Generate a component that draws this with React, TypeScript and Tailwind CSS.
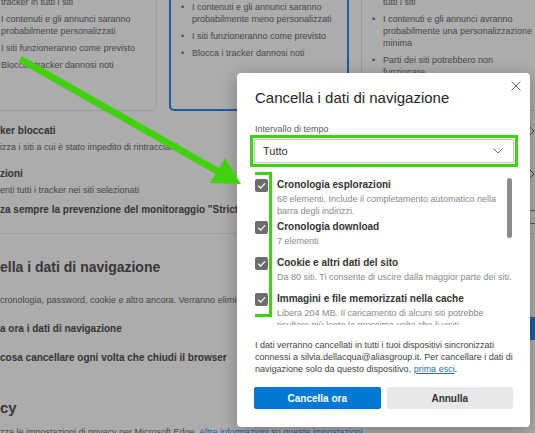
import React from "react";

const cards: { lines: string[][]; box: string; pad: string }[] = [
  {
    box: "w-[178px] border border-[#9a9a9a] rounded-[5px]",
    pad: "pt-[3px] pl-[10px]",
    lines: [
      ["Consente la maggior parte dei", "tracker in tutti i siti"],
      ["I contenuti e gli annunci saranno", "probabilmente personalizzati"],
      ["I siti funzioneranno come previsto"],
      ["Blocca i tracker dannosi noti"],
    ],
  },
  {
    box: "w-[180px] border-2 border-[#1c5a9e] rounded-[5px]",
    pad: "pt-[19px] pl-[10px]",
    lines: [
      ["I contenuti e gli annunci saranno", "probabilmente meno personalizzati"],
      ["I siti funzioneranno come previsto"],
      ["Blocca i tracker dannosi noti"],
    ],
  },
  {
    box: "w-[200px] border border-[#9a9a9a] rounded-[5px]",
    pad: "pt-[3px] pl-[10px]",
    lines: [
      ["Blocca la maggior parte dei tracker in", "tutti i siti"],
      ["I contenuti e gli annunci avranno", "probabilmente una personalizzazione", "minima"],
      ["Parti dei siti potrebbero non", "funzionare"],
    ],
  },
];

function Chevron() {
  return (
    <svg width="6" height="10" viewBox="0 0 6 10" className="shrink-0">
      <path d="M1 1l4 4-4 4" stroke="#444" strokeWidth="1" fill="none" />
    </svg>
  );
}

function BackgroundPage() {
  return (
    <div className="flex flex-col w-[535px] text-[#474747]">
      {/* cards */}
      <div className="flex gap-[12px] -ml-[21px] -mt-[20px] h-[131px]">
        {cards.map((c, i) => (
          <div key={i} className={`${c.box} ${c.pad} shrink-0`}>
            <ul className="flex flex-col gap-[5px] text-[9px] leading-[12px]">
              {c.lines.map((l, j) => (
                <li key={j} className="flex">
                  <span className="w-[11px] shrink-0">•</span>
                  <span>
                    {l.map((t, k) => (
                      <span key={k} className="block whitespace-nowrap">{t}</span>
                    ))}
                  </span>
                </li>
              ))}
            </ul>
          </div>
        ))}
      </div>

      {/* rows */}
      <div className="pt-[13px]">
        <div className="flex items-center justify-between text-[10px] leading-[14px] font-bold text-[#343434]">
          <span className="whitespace-nowrap">ker bloccati</span>
          <Chevron />
        </div>
        <div className="mt-[3px] text-[9px] leading-[12px] whitespace-nowrap">
          izza i siti a cui è stato impedito di rintracciarti
        </div>
      </div>
      <div className="pt-[14px]">
        <div className="flex items-center justify-between text-[10px] leading-[14px] font-bold text-[#343434]">
          <span className="whitespace-nowrap">zioni</span>
          <Chevron />
        </div>
        <div className="mt-[3px] text-[9px] leading-[12px] whitespace-nowrap">
          enti tutti i tracker nei siti selezionati
        </div>
      </div>
      <div className="pt-[7px] pb-[16px] flex items-start justify-between border-b border-[#9c9c9c]">
        <span className="text-[10px] leading-[14px] font-bold text-[#343434] whitespace-nowrap">
          za sempre la prevenzione del monitoraggio "Strict" per l'esplorazione InPrivate
        </span>
        <span className="mt-[7px] -mb-[7px] -mr-[20px] w-[36px] h-[14px] shrink-0 rounded-full border border-[#555]" />
      </div>

      <div className="mt-[23px] text-[14px] leading-[20px] font-bold text-[#363636] whitespace-nowrap">
        ella i dati di navigazione
      </div>
      <div className="mt-[17px] text-[9px] leading-[12px] whitespace-nowrap">
        cronologia, password, cookie e altro ancora. Verranno eliminati solo i dati di questo profilo.
      </div>
      <div className="mt-[11px] flex items-center justify-between">
        <span className="text-[10px] leading-[14px] font-bold text-[#343434] whitespace-nowrap">
          a ora i dati di navigazione
        </span>
        <span className="w-[90px] h-[23px] -mr-[5px] rounded-[2px] bg-[#1e5c9c] shrink-0" />
      </div>
      <div className="mt-[11px] text-[10px] leading-[14px] font-bold text-[#343434] whitespace-nowrap">
        cosa cancellare ogni volta che chiudi il browser
      </div>
      <div className="mt-[33px] text-[15px] leading-[20px] font-bold text-[#363636]">cy</div>
      <div className="mt-[8px] text-[9px] leading-[12px] whitespace-nowrap">
        zza le impostazioni di privacy per Microsoft Edge.{" "}
        <span className="text-[#1f5a9a]">Altre informazioni su queste impostazioni</span>
      </div>
    </div>
  );
}

function Check() {
  return (
    <span className="mt-[1px] w-[13px] h-[13px] shrink-0 rounded-[2px] bg-[#6d6d6d] flex items-center justify-center">
      <svg width="11" height="11" viewBox="0 0 11 11">
        <path d="M2.3 5.8l2.3 2.3L9 3.4" stroke="#fff" strokeWidth="1.3" fill="none" />
      </svg>
    </span>
  );
}

const items = [
  {
    title: "Cronologia esplorazioni",
    desc: ["68 elementi. Include il completamento automatico nella", "barra degli indirizzi."],
    mt: "",
  },
  { title: "Cronologia download", desc: ["7 elementi"], mt: "mt-[3px]" },
  {
    title: "Cookie e altri dati del sito",
    desc: ["Da 80 siti. Ti consente di uscire dalla maggior parte dei siti."],
    mt: "mt-[9px]",
  },
  {
    title: "Immagini e file memorizzati nella cache",
    desc: [
      "Libera 204 MB. Il caricamento di alcuni siti potrebbe",
      "risultare più lento la prossima volta che li visiti.",
    ],
    mt: "mt-[9px]",
  },
];

function Dialog() {
  return (
    <div className="absolute left-[237px] top-[73px] w-[293px] h-[354px] bg-white rounded-[4px] shadow-[0_4px_18px_rgba(0,0,0,0.28)] px-[18px] pt-[15px] pb-[18px] flex flex-col">
      <svg width="10" height="10" viewBox="0 0 10 10" className="absolute top-[8px] right-[9px]">
        <path d="M0.5 0.5l9 9M9.5 0.5l-9 9" stroke="#6a6a6a" strokeWidth="1" />
      </svg>
      <div className="text-[15px] leading-[20px] text-[#262626] whitespace-nowrap">
        Cancella i dati di navigazione
      </div>
      <div className="mt-[16px] text-[9px] leading-[10px] text-[#5c5c5c]">Intervallo di tempo</div>

      <div className="mt-[1px] -ml-[5px] w-[268px] h-[32px] shrink-0 border-[3px] border-[#41d10f] p-[1px]">
        <div className="h-full border border-[#cdcdcd] bg-white flex items-center justify-between pl-[8px] pr-[10px] text-[11px] text-[#2e2e2e]">
          <span>Tutto</span>
          <svg width="10" height="6" viewBox="0 0 10 6">
            <path d="M0.5 0.5L5 5l4.5-4.5" stroke="#6a6a6a" strokeWidth="1" fill="none" />
          </svg>
        </div>
      </div>

      <div className="relative mt-[5px] h-[153px] shrink-0 overflow-hidden">
        <div className="pt-[6px] flex flex-col">
          {items.map((it) => (
            <div key={it.title} className={`flex gap-[9px] ${it.mt}`}>
              <Check />
              <div className="flex flex-col">
                <span className="text-[10px] leading-[14px] font-bold text-[#333] whitespace-nowrap">
                  {it.title}
                </span>
                <div className="mt-[1px] flex flex-col">
                  {it.desc.map((d) => (
                    <span key={d} className="text-[9px] leading-[12px] text-[#8a8a8a] whitespace-nowrap">
                      {d}
                    </span>
                  ))}
                </div>
              </div>
            </div>
          ))}
        </div>
        {/* scrollbar */}
        <div className="absolute right-0 top-[6px] w-[5px] h-[60px] rounded-full bg-[#8c8c8c]" />
        {/* highlight round the checkboxes */}
        <div className="absolute -left-[5px] top-0 w-[22px] h-[145px] border-[3px] border-[#41d10f]" />
      </div>

      <div className="mt-[14px] text-[9px] leading-[12px] text-[#444] whitespace-nowrap">
        <div>I dati verranno cancellati in tutti i tuoi dispositivi sincronizzati</div>
        <div>connessi a silvia.dellacqua@aliasgroup.it. Per cancellare i dati di</div>
        <div>
          navigazione solo da questo dispositivo,{" "}
          <span className="text-[#2f6fb0] underline">prima esci</span>.
        </div>
      </div>

      <div className="mt-[12px] -mx-[1px] grid grid-cols-2 gap-[6px]">
        <button className="h-[22px] rounded-[2px] bg-[#0078d4] text-white text-[10px] font-bold">
          Cancella ora
        </button>
        <button className="h-[22px] rounded-[2px] bg-[#e9e9e9] text-[#333] text-[10px] font-bold">
          Annulla
        </button>
      </div>
    </div>
  );
}

function Arrow() {
  return (
    <svg width="535" height="433" viewBox="0 0 535 433" className="absolute inset-0 pointer-events-none">
      <line x1="20" y1="59" x2="219" y2="172" stroke="#41d10f" strokeWidth="7" />
      <polygon points="241,184 210,183 225,158" fill="#41d10f" />
    </svg>
  );
}

export default function App() {
  return (
    <div className="relative w-[535px] h-[433px] overflow-hidden bg-[#acacac] font-['Liberation_Sans',Arial,sans-serif]">
      <BackgroundPage />
      <Dialog />
      <Arrow />
    </div>
  );
}
